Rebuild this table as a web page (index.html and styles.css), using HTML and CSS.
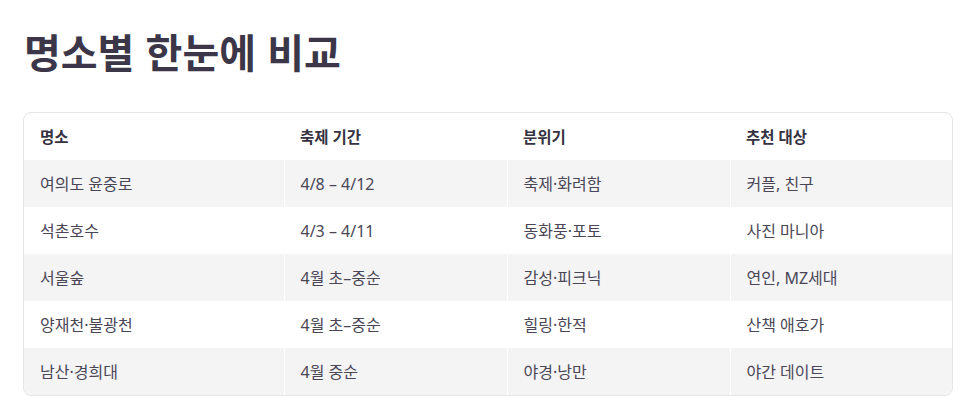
FILE: index.html
```html
<!DOCTYPE html>
<html lang="ko">
<head>
<meta charset="utf-8">
<link rel="stylesheet" href="styles.css">
</head>
<body>
<main class="page">
  <h1 class="title">명소별 한눈에 비교</h1>
  <div class="table-wrap">
    <table class="cmp">
      <colgroup>
        <col class="c1"><col class="c2"><col class="c3"><col class="c4">
      </colgroup>
      <thead>
        <tr><th>명소</th><th>축제 기간</th><th>분위기</th><th>추천 대상</th></tr>
      </thead>
      <tbody>
        <tr><td>여의도 윤중로</td><td>4/8 – 4/12</td><td>축제·화려함</td><td>커플, 친구</td></tr>
        <tr><td>석촌호수</td><td>4/3 – 4/11</td><td>동화풍·포토</td><td>사진 마니아</td></tr>
        <tr><td>서울숲</td><td>4월 초–중순</td><td>감성·피크닉</td><td>연인, MZ세대</td></tr>
        <tr><td>양재천·불광천</td><td>4월 초–중순</td><td>힐링·한적</td><td>산책 애호가</td></tr>
        <tr><td>남산·경희대</td><td>4월 중순</td><td>야경·낭만</td><td>야간 데이트</td></tr>
      </tbody>
    </table>
  </div>
</main>
</body>
</html>
```

FILE: styles.css
```css
html, body {
  margin: 0;
  padding: 0;
  background: #ffffff;
}
body {
  font-family: "Noto Sans", "Noto Sans CJK KR", sans-serif;
  color: #3d3a48;
}
.page {
  padding: 25px 18px 0 23px;
}
.title {
  margin: 0 0 0 1px;
  font-family: "Noto Sans CJK KR", sans-serif;
  font-size: 40px;
  line-height: 52px;
  font-weight: 700;
  color: #3b3648;
}
.table-wrap {
  margin-top: 35px;
  width: 930px;
  border: 1px solid #e6e6e8;
  border-radius: 8px;
  overflow: hidden;
  box-sizing: border-box;
}
.cmp {
  width: 100%;
  border-collapse: collapse;
  table-layout: fixed;
}
.c1 { width: 260px; }
.c2 { width: 223px; }
.c3 { width: 223px; }
.c4 { width: 222px; }
.cmp th {
  text-align: left;
  font-size: 15.5px;
  line-height: 20px;
  font-weight: 700;
  color: #363241;
  height: 47px;
  padding: 0 16px;
  vertical-align: middle;
}
.cmp td {
  font-size: 16px;
  line-height: 20px;
  font-weight: 400;
  color: #4a4655;
  height: 47px;
  padding: 0 16px;
  vertical-align: middle;
  border-left: 1px solid #ffffff;
}
.cmp td:first-child {
  border-left: none;
}
.cmp tbody tr:nth-child(odd) td {
  background: #f4f4f5;
}
.cmp tbody tr:nth-child(even) td {
  background: #ffffff;
}
```
